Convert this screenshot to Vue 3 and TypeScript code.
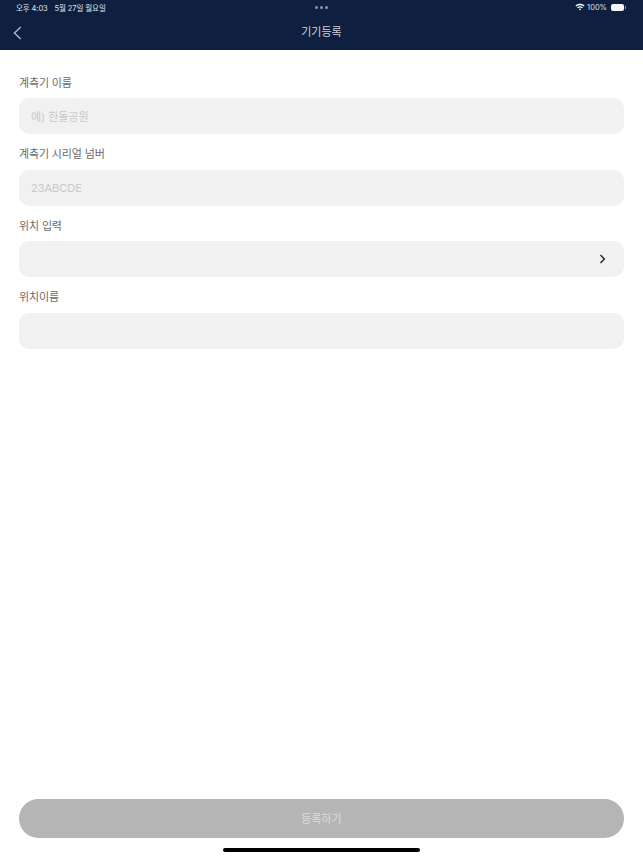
<script setup lang="ts">
interface Field {
  label: string
  placeholder: string
  arrow?: boolean
}

const fields: Field[] = [
  { label: '계측기 이름', placeholder: '예) 한돌공원' },
  { label: '계측기 시리얼 넘버', placeholder: '23ABCDE' },
  { label: '위치 입력', placeholder: '', arrow: true },
  { label: '위치이름', placeholder: '' },
]
</script>

<template>
  <div class="page">
    <header class="top">
      <div class="status">
        <div class="status-left">
          <span>오후 4:03</span>
          <span>5월 27일 월요일</span>
        </div>
        <div class="dots"><i></i><i></i><i></i></div>
        <div class="status-right">
          <svg width="10" height="8" viewBox="0 0 10 8">
            <path d="M0.4 2.6C3 0.2 7 0.2 9.6 2.6L8.7 3.6C6.6 1.7 3.4 1.7 1.3 3.6Z" fill="#fff" />
            <path d="M2.1 4.4C3.8 2.9 6.2 2.9 7.9 4.4L7 5.3C5.8 4.3 4.2 4.3 3 5.3Z" fill="#fff" />
            <path d="M3.8 6.1C4.5 5.5 5.5 5.5 6.2 6.1L5 7.6Z" fill="#fff" />
          </svg>
          <span>100%</span>
          <div class="battery"></div>
          <div class="battery-cap"></div>
        </div>
      </div>
      <div class="nav">
        <svg class="back" width="9" height="14" viewBox="0 0 9 14">
          <path d="M7.8 1L1.4 7L7.8 13" fill="none" stroke="#b4b9c3" stroke-width="1.4" />
        </svg>
        <span class="title">기기등록</span>
      </div>
    </header>

    <main class="form">
      <div v-for="f in fields" :key="f.label" class="field">
        <label class="label">{{ f.label }}</label>
        <div class="input">
          <span class="placeholder">{{ f.placeholder }}</span>
          <svg v-if="f.arrow" width="7" height="10" viewBox="0 0 7 10">
            <path d="M1.5 1L5.3 5L1.5 9" fill="none" stroke="#333" stroke-width="1.6" />
          </svg>
        </div>
      </div>
    </main>

    <div class="bottom">
      <button class="submit" type="button">등록하기</button>
      <div class="home-bar"></div>
    </div>
  </div>
</template>

<style>
html,
body {
  margin: 0;
  background: #fff;
}
</style>

<style scoped>
.page {
  width: 643px;
  height: 857px;
  display: flex;
  flex-direction: column;
  overflow: hidden;
  background: #fff;
  font-family: "Inter", "Noto Sans CJK KR", "Liberation Sans", sans-serif;
}

.top {
  height: 50px;
  flex-shrink: 0;
  background: #0e1f40;
  color: #fff;
  display: flex;
  flex-direction: column;
}

.status {
  height: 14px;
  padding: 0 17px 0 16px;
  display: grid;
  grid-template-columns: 1fr auto 1fr;
  align-items: center;
  font-size: 7.5px;
  color: #dfe2e7;
}

.status-left {
  display: flex;
  gap: 7px;
  letter-spacing: -0.1px;
}

.status-right {
  display: flex;
  align-items: center;
  justify-content: flex-end;
  gap: 2px;
}

.dots {
  display: flex;
  gap: 2px;
}

.dots i {
  width: 3px;
  height: 3px;
  border-radius: 50%;
  background: #8d95a5;
}

.battery {
  width: 13px;
  height: 7px;
  margin-left: 2px;
  border-radius: 2px;
  background: #f4f5f7;
}

.battery-cap {
  width: 1px;
  height: 3px;
  margin-left: -1px;
  background: #8d95a5;
}

.nav {
  flex: 1;
  position: relative;
  display: flex;
  align-items: center;
  justify-content: center;
}

.back {
  position: absolute;
  left: 13px;
  top: 12px;
}

.title {
  font-size: 11px;
  line-height: 16px;
  margin-top: -1px;
  color: #cfd3da;
}

.form {
  flex: 1;
  padding: 24.5px 19px 0;
  display: flex;
  flex-direction: column;
  gap: 12px;
}

.field {
  display: flex;
  flex-direction: column;
  gap: 7.5px;
}

.label {
  font-size: 11px;
  line-height: 16px;
  letter-spacing: -0.15px;
  color: #6a6a6a;
}

.input {
  height: 36px;
  padding: 0 18px 0 12px;
  display: flex;
  align-items: center;
  justify-content: space-between;
  border-radius: 10px;
  background: #f1f1f1;
}

.placeholder {
  font-size: 11px;
  color: #c8c8c8;
}

.bottom {
  padding: 0 19px;
  display: flex;
  flex-direction: column;
  align-items: center;
}

.submit {
  width: 100%;
  height: 39px;
  padding: 0 0 2px;
  border: none;
  border-radius: 20px;
  background: #b5b5b5;
  color: #dedede;
  font-family: inherit;
  font-size: 11px;
}

.home-bar {
  width: 197px;
  height: 4px;
  margin: 10px 0 5px;
  border-radius: 2px;
  background: #000;
}
</style>
